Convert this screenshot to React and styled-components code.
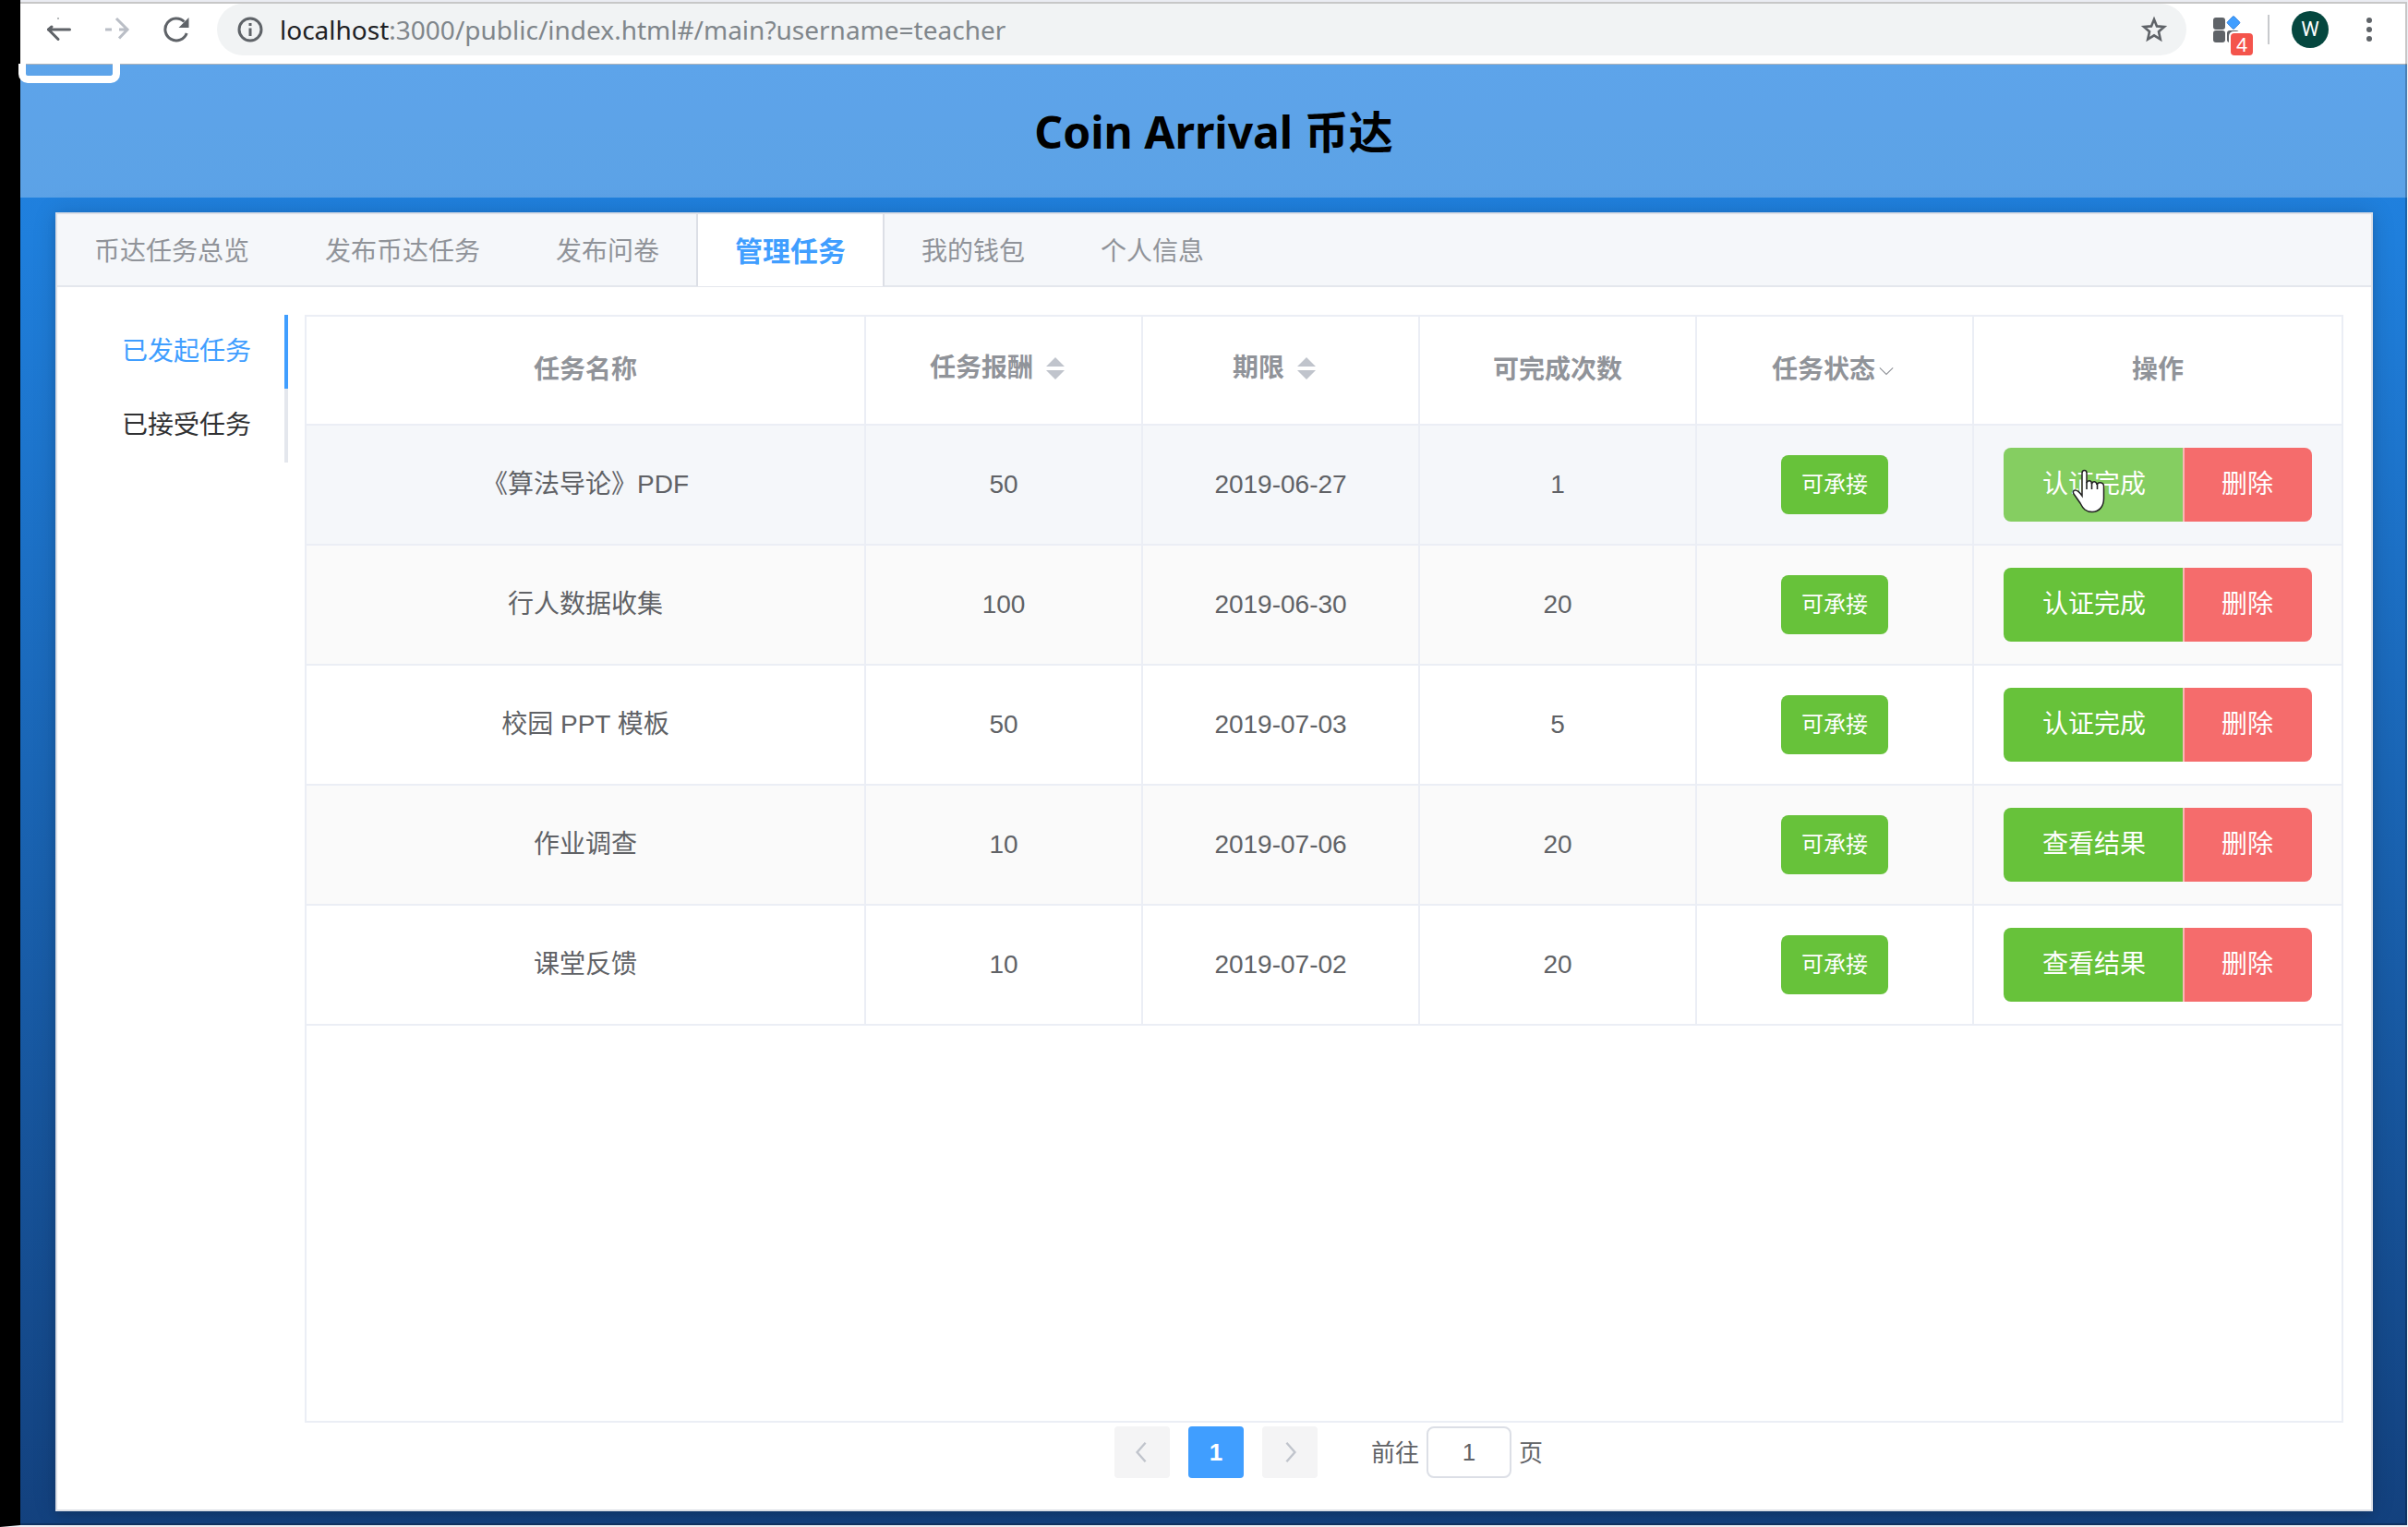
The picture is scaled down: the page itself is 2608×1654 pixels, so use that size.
import React from "react";
import styled, { createGlobalStyle } from "styled-components";

const Global = createGlobalStyle`
  *, *::before, *::after { box-sizing: border-box; }
  html, body, #root { height: 100%; }
  body { margin: 0; background: #fff; }
  button, input { font: inherit; margin: 0; }
`;

const uiFont = `"Liberation Sans", "Noto Sans CJK SC", sans-serif`;
const brandFont = `"Noto Sans", "Noto Sans CJK SC", sans-serif`;

const Screen = styled.div`
  position: relative;
  display: flex;
  flex-direction: column;
  min-height: 100vh;
  border-left: 22px solid #000;
  border-right: 1px solid #eef0f5;
  border-bottom: 2px solid #eef0f5;
  font-family: ${uiFont};
  font-size: 28px;
  color: #606266;
`;

const WindowEdge = styled.div`
  position: absolute;
  inset: 2px 0 0 0;
  border: 2px solid rgba(0, 0, 0, 0.22);
  border-left: 0;
  pointer-events: none;
  z-index: 3;
`;

const Toolbar = styled.header`
  display: flex;
  align-items: center;
  height: 70px;
  padding: 2px 27px 9px 23px;
  border-top: 2px solid #eaecf2;
  border-bottom: 1px solid #b0b4b8;
  background: #fff;
`;

const IconButton = styled.button`
  display: flex;
  flex: none;
  align-items: center;
  justify-content: center;
  width: ${(p) => p.$w || 64}px;
  height: 56px;
  padding: 0;
  border: 0;
  background: none;
  color: ${(p) => (p.disabled ? "#babec6" : "#5f6368")};
`;

const AddressBar = styled.div`
  display: flex;
  flex: 1;
  align-items: center;
  height: 56px;
  margin-left: 26px;
  padding: 0 10px 0 22px;
  border-radius: 28px;
  background: #f1f3f4;
`;

const Url = styled.p`
  flex: 1;
  margin: 0 0 0 18px;
  font-family: ${brandFont};
  font-size: 28px;
  line-height: 40px;
  color: #80868b;

  b { font-weight: 400; color: #202124; }
`;

const Extension = styled.button`
  position: relative;
  flex: none;
  width: 44px;
  height: 52px;
  margin-left: 29px;
  padding: 0;
  border: 0;
  background: none;

  svg { display: block; }
`;

const Count = styled.span`
  position: absolute;
  left: 19px;
  top: 30px;
  width: 24px;
  height: 24px;
  border-radius: 4px;
  background: #f4544c;
  color: #fff;
  font-size: 22px;
  line-height: 25px;
  text-align: center;
`;

const Divider = styled.span`
  width: 2px;
  height: 32px;
  margin: 0 24px 0 15px;
  background: #c8cacd;
`;

const Avatar = styled.button`
  width: 40px;
  height: 40px;
  margin-right: 30px;
  padding: 0;
  border: 0;
  border-radius: 50%;
  background: #05473f;
  color: #fff;
  font-family: Roboto, sans-serif;
  font-size: 22px;
  line-height: 40px;
`;

const FocusBox = styled.div`
  position: absolute;
  left: -2px;
  top: 24px;
  width: 110px;
  height: 66px;
  border: 8px solid #fff;
  border-top: 0;
  border-radius: 10px;
  clip-path: inset(45px 0 0 0);
`;

const Page = styled.main`
  display: flex;
  flex: 1;
  flex-direction: column;
  background: linear-gradient(#2283e2, #1f7fdc 12%, #13417e);
`;

const Banner = styled.div`
  display: flex;
  align-items: center;
  justify-content: center;
  height: 144px;
  padding-top: 2px;
  background: rgba(255, 255, 255, 0.27);
`;

const Title = styled.h1`
  margin: 0;
  font-family: ${brandFont};
  font-size: 48px;
  font-weight: 700;
  line-height: 64px;
  color: #000;
`;

const Card = styled.section`
  display: flex;
  flex: 1;
  flex-direction: column;
  margin: 16px 37px 15px 38px;
  border: 2px solid #dcdfe6;
  background: #fff;
  box-shadow: 0 4px 8px rgba(0, 0, 0, 0.12), 0 0 24px rgba(0, 0, 0, 0.14);
`;

const Tabs = styled.nav`
  display: flex;
  height: 79px;
  border-bottom: 2px solid #e4e7ed;
  background: #f5f7fa;
`;

const Tab = styled.button`
  height: 78px;
  margin-left: -2px;
  padding: 4px 40px 0;
  border: 0 solid ${(p) => (p.$active ? "#dcdfe6" : "transparent")};
  border-width: 0 2px;
  background: ${(p) => (p.$active ? "#fff" : "none")};
  color: ${(p) => (p.$active ? "#409eff" : "#909399")};
  font-size: ${(p) => (p.$active ? 30 : 28)}px;
  font-weight: ${(p) => (p.$active ? 700 : 400)};
  line-height: 74px;
`;

const Body = styled.div`
  display: flex;
  flex: 1;
  padding: 30px;
`;

const SideMenu = styled.nav`
  display: flex;
  flex: none;
  flex-direction: column;
  width: 220px;
  margin-right: 18px;
`;

const SideItem = styled.button`
  height: 80px;
  padding: 0 36px 0 40px;
  border: 0;
  border-right: 4px solid ${(p) => (p.$active ? "#409eff" : "#e4e7ed")};
  background: none;
  color: ${(p) => (p.$active ? "#409eff" : "#303133")};
  line-height: 80px;
  text-align: left;
`;

const Content = styled.div`
  display: flex;
  flex: 1;
  flex-direction: column;
`;

const TableFrame = styled.div`
  flex: 1;
  border: 2px solid #ebeef5;
  border-right-width: 0;
  box-shadow: inset -2px 0 #ebeef5;
`;

const Table = styled.table`
  width: 100%;
  table-layout: fixed;
  border-collapse: separate;
  border-spacing: 0;
`;

const Col = styled.col`
  width: ${(p) => (p.$w ? `${p.$w}px` : "auto")};
`;

const HeadCell = styled.th`
  height: 118px;
  padding: 0;
  border: 0 solid #ebeef5;
  border-width: 0 2px 2px 0;
  color: #909399;
  font-weight: 700;
  line-height: 40px;
`;

const HeadLabel = styled.span`
  display: inline-flex;
  align-items: center;
  padding-bottom: ${(p) => (p.$sortable ? 4 : 0)}px;
  vertical-align: middle;
`;

const SortButton = styled.button`
  display: flex;
  align-items: center;
  justify-content: center;
  width: 48px;
  height: 44px;
  padding: 0;
  border: 0;
  background: none;
`;

const FilterButton = styled(SortButton)`
  width: 24px;
`;

const Row = styled.tr`
  background: ${(p) => (p.$hover ? "#f5f7fa" : p.$striped ? "#fafafa" : "#fff")};
`;

const Cell = styled.td`
  height: 130px;
  padding: 0;
  border: 0 solid #ebeef5;
  border-width: 0 2px 2px 0;
  line-height: 40px;
  text-align: center;
`;

const Tag = styled.span`
  display: inline-block;
  height: 64px;
  padding: 0 22px;
  border-radius: 8px;
  background: #67c23a;
  color: #fff;
  font-size: 24px;
  line-height: 64px;
  vertical-align: middle;
`;

const Actions = styled.div`
  position: relative;
  display: inline-flex;
  vertical-align: middle;
`;

const ActionButton = styled.button`
  height: 80px;
  padding: 0 42px;
  border: 0;
  border-radius: 8px 0 0 8px;
  background: ${(p) => (p.$hover ? "#85ce61" : "#67c23a")};
  color: #fff;
  line-height: 80px;
`;

const DeleteButton = styled(ActionButton)`
  margin-left: -2px;
  padding: 0 42px 0 40px;
  border-left: 2px solid rgba(255, 255, 255, 0.5);
  border-radius: 0 8px 8px 0;
  background: #f56c6c;
`;

const Pointer = styled.svg`
  position: absolute;
  left: 74px;
  top: 23px;
`;

const Pager = styled.div`
  display: flex;
  align-items: center;
  justify-content: center;
  gap: 20px;
  padding: 4px 0 4px 10px;
  font-size: 26px;
`;

const PageButton = styled.button`
  display: flex;
  align-items: center;
  justify-content: center;
  width: 60px;
  height: 56px;
  padding: 0;
  border: 0;
  border-radius: 4px;
  background: ${(p) => (p.$active ? "#409eff" : "#f4f4f5")};
  color: ${(p) => (p.$active ? "#fff" : "#c0c4cc")};
  font-weight: 700;
`;

const Jump = styled.label`
  display: flex;
  align-items: center;
  gap: 8px;
  margin-left: 38px;
`;

const JumpText = styled.span`
  padding-bottom: 4px;
`;

const JumpInput = styled.input`
  width: 92px;
  height: 56px;
  padding: 0;
  border: 2px solid #dcdfe6;
  border-radius: 8px;
  background: #fff;
  color: #606266;
  text-align: center;
`;

const tabs = ["币达任务总览", "发布币达任务", "发布问卷", "管理任务", "我的钱包", "个人信息"];
const sideItems = ["已发起任务", "已接受任务"];
const tasks = [
  { name: "《算法导论》PDF", reward: 50, due: "2019-06-27", count: 1, action: "认证完成" },
  { name: "行人数据收集", reward: 100, due: "2019-06-30", count: 20, action: "认证完成" },
  { name: "校园 PPT 模板", reward: 50, due: "2019-07-03", count: 5, action: "认证完成" },
  { name: "作业调查", reward: 10, due: "2019-07-06", count: 20, action: "查看结果" },
  { name: "课堂反馈", reward: 10, due: "2019-07-02", count: 20, action: "查看结果" },
];

const BackIcon = () => (
  <svg width="28" height="28" viewBox="0 0 28 28" fill="none" stroke="currentColor" strokeWidth="3" strokeLinecap="round" strokeLinejoin="round">
    <path d="M26.5 14H3.5L14 24.5" />
    <path d="M3.5 14 7 11" />
    <path d="M13.500 2H14.500" strokeWidth="1" />
  </svg>
);

const ForwardIcon = () => (
  <svg width="28" height="28" viewBox="0 0 28 28" fill="none" stroke="currentColor" strokeWidth="3">
    <path d="M1 14H8M16 14H26M13 2 25 14 16 23.500" />
  </svg>
);

const ReloadIcon = () => (
  <svg width="28" height="28" viewBox="0 0 28 28">
    <path d="M25.200 18A12 12 0 1 1 22.500 5.500" fill="none" stroke="currentColor" strokeWidth="3" />
    <path d="M27.500 1V12H16.500Z" fill="currentColor" />
  </svg>
);

const InfoIcon = () => (
  <svg width="28" height="28" viewBox="0 0 28 28" fill="none" stroke="#5f6368" strokeWidth="3">
    <circle cx="14" cy="14" r="12" />
    <path d="M14 12.500V21M14 7V10" />
  </svg>
);

const StarIcon = () => (
  <svg width="30" height="30" viewBox="0 0 30 30" fill="none" stroke="currentColor" strokeWidth="2.600">
    <path d="M15 4 18 11.400 26 12 20 17.300 21.800 25.500 15 21.300 8.200 25.500 10 17.300 4 12 12 11.400Z" />
  </svg>
);

const ExtensionIcon = () => (
  <svg width="44" height="52" viewBox="0 0 44 52" fill="#5f6368">
    <rect x="0" y="13" width="13" height="13" rx="3" />
    <rect x="0" y="27" width="13" height="13" rx="3" />
    <rect x="15" y="27" width="13" height="13" rx="3" />
    <rect x="16.700" y="13.200" width="10.600" height="10.600" rx="1.500" fill="#409eff" stroke="#1f6fd0" strokeWidth="0.600" transform="rotate(45 22 18.500)" />
    <rect x="17" y="28" width="28" height="28" rx="5" fill="#fff" />
  </svg>
);

const MenuIcon = () => (
  <svg width="8" height="28" viewBox="0 0 8 28" fill="currentColor">
    <circle cx="4" cy="4" r="3" />
    <circle cx="4" cy="14" r="3" />
    <circle cx="4" cy="24" r="3" />
  </svg>
);

const SortIcon = () => (
  <svg width="20" height="24" viewBox="0 0 20 24" fill="#c0c4cc">
    <path d="M0 10 10 0 20 10ZM0 14H20L10 24Z" />
  </svg>
);

const Chevron = ({ size, d, width, color = "currentColor" }) => (
  <svg width={size} height={size} viewBox="0 0 20 20" fill="none" stroke={color} strokeWidth={width}>
    <path d={d} />
  </svg>
);

const Hand = () => (
  <Pointer width="36" height="48" viewBox="0 0 36 48" aria-hidden="true">
    <path
      d="M11 29V4.500C11 0.500 16 0.500 16 4.500V15C17 11.500 21.500 12 21.500 16C22.500 12.500 26.500 13 27 17C28 13.500 34 14 34.500 18V32C34.500 41 29 46.500 22 46.500C15 46.500 12 43 9 37L2 27C-0.500 22.500 5 20 11 29Z"
      fill="#fff"
      stroke="#222"
      strokeWidth="1.500"
    />
    <path d="M16 14V22M21.500 15V22M27.500 16V22" stroke="#222" strokeWidth="1.600" />
  </Pointer>
);

export default function App() {
  return (
    <Screen>
      <Global />
      <WindowEdge />
      <Toolbar>
        <IconButton $w={36} aria-label="后退"><BackIcon /></IconButton>
        <IconButton $w={92} aria-label="前进" disabled><ForwardIcon /></IconButton>
        <IconButton $w={36} aria-label="刷新"><ReloadIcon /></IconButton>
        <AddressBar>
          <InfoIcon />
          <Url><b>localhost</b>:3000/public/index.html#/main?username=teacher</Url>
          <IconButton $w={50} aria-label="收藏"><StarIcon /></IconButton>
        </AddressBar>
        <Extension aria-label="扩展程序">
          <ExtensionIcon />
          <Count>4</Count>
        </Extension>
        <Divider />
        <Avatar>W</Avatar>
        <IconButton $w={28} aria-label="菜单"><MenuIcon /></IconButton>
      </Toolbar>
      <FocusBox />
      <Page>
        <Banner>
          <Title>Coin Arrival 币达</Title>
        </Banner>
        <Card>
          <Tabs>
            {tabs.map((t, i) => (
              <Tab key={t} $active={i === 3}>{t}</Tab>
            ))}
          </Tabs>
          <Body>
            <SideMenu>
              {sideItems.map((t, i) => (
                <SideItem key={t} $active={i === 0}>{t}</SideItem>
              ))}
            </SideMenu>
            <Content>
              <TableFrame>
                <Table>
                  <colgroup>
                    <Col />
                    <Col $w={300} />
                    <Col $w={300} />
                    <Col $w={300} />
                    <Col $w={300} />
                    <Col $w={400} />
                  </colgroup>
                  <thead>
                    <tr>
                      <HeadCell>任务名称</HeadCell>
                      <HeadCell>
                        <HeadLabel $sortable>任务报酬<SortButton aria-label="按任务报酬排序"><SortIcon /></SortButton></HeadLabel>
                      </HeadCell>
                      <HeadCell>
                        <HeadLabel $sortable>期限<SortButton aria-label="按期限排序"><SortIcon /></SortButton></HeadLabel>
                      </HeadCell>
                      <HeadCell>可完成次数</HeadCell>
                      <HeadCell>
                        <HeadLabel>
                          任务状态
                          <FilterButton aria-label="筛选任务状态">
                            <Chevron size={18} d="M2 7 10 15 18 7" width={1.2} color="#909399" />
                          </FilterButton>
                        </HeadLabel>
                      </HeadCell>
                      <HeadCell>操作</HeadCell>
                    </tr>
                  </thead>
                  <tbody>
                    {tasks.map((t, i) => (
                      <Row key={t.name} $hover={i === 0} $striped={i % 2 === 1}>
                        <Cell>{t.name}</Cell>
                        <Cell>{t.reward}</Cell>
                        <Cell>{t.due}</Cell>
                        <Cell>{t.count}</Cell>
                        <Cell><Tag>可承接</Tag></Cell>
                        <Cell>
                          <Actions>
                            <ActionButton $hover={i === 0}>{t.action}</ActionButton>
                            <DeleteButton>删除</DeleteButton>
                            {i === 0 && <Hand />}
                          </Actions>
                        </Cell>
                      </Row>
                    ))}
                  </tbody>
                </Table>
              </TableFrame>
              <Pager>
                <PageButton aria-label="上一页" disabled><Chevron size={24} d="M13 1.500 5.500 10 13 18.500" width={2} /></PageButton>
                <PageButton $active>1</PageButton>
                <PageButton aria-label="下一页" disabled><Chevron size={24} d="M7 1.500 14.500 10 7 18.500" width={2} /></PageButton>
                <Jump>
                  <JumpText>前往</JumpText>
                  <JumpInput defaultValue="1" />
                  <JumpText>页</JumpText>
                </Jump>
              </Pager>
            </Content>
          </Body>
        </Card>
      </Page>
    </Screen>
  );
}
